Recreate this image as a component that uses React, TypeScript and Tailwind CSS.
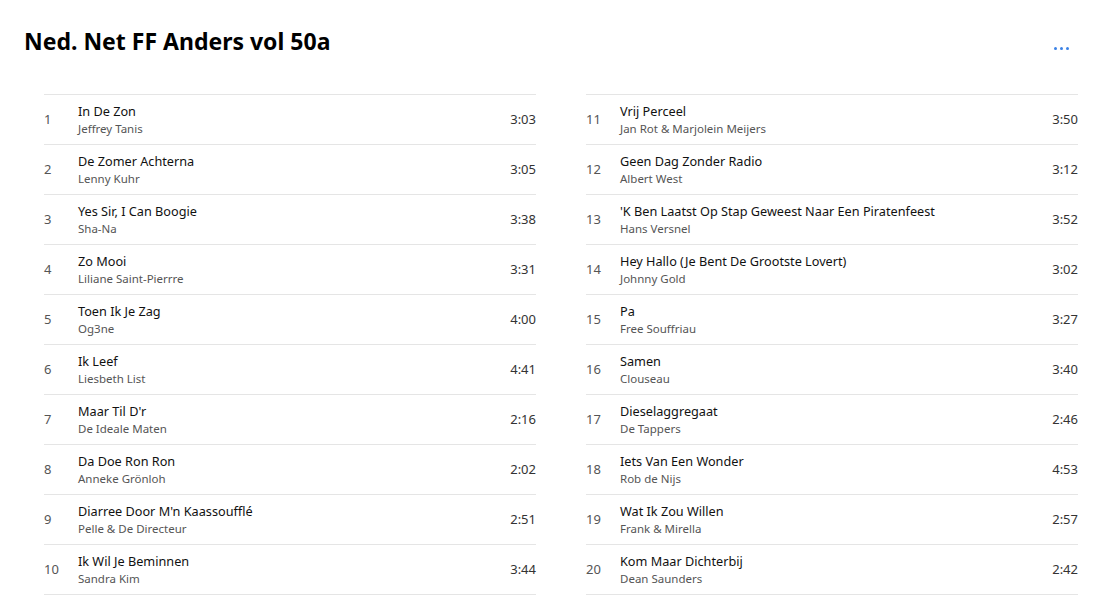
import React from "react";

const tracks: [string, string, string][] = [
  ["In De Zon", "Jeffrey Tanis", "3:03"],
  ["De Zomer Achterna", "Lenny Kuhr", "3:05"],
  ["Yes Sir, I Can Boogie", "Sha-Na", "3:38"],
  ["Zo Mooi", "Liliane Saint-Pierrre", "3:31"],
  ["Toen Ik Je Zag", "Og3ne", "4:00"],
  ["Ik Leef", "Liesbeth List", "4:41"],
  ["Maar Til D'r", "De Ideale Maten", "2:16"],
  ["Da Doe Ron Ron", "Anneke Grönloh", "2:02"],
  ["Diarree Door M'n Kaassoufflé", "Pelle & De Directeur", "2:51"],
  ["Ik Wil Je Beminnen", "Sandra Kim", "3:44"],
  ["Vrij Perceel", "Jan Rot & Marjolein Meijers", "3:50"],
  ["Geen Dag Zonder Radio", "Albert West", "3:12"],
  ["'K Ben Laatst Op Stap Geweest Naar Een Piratenfeest", "Hans Versnel", "3:52"],
  ["Hey Hallo (Je Bent De Grootste Lovert)", "Johnny Gold", "3:02"],
  ["Pa", "Free Souffriau", "3:27"],
  ["Samen", "Clouseau", "3:40"],
  ["Dieselaggregaat", "De Tappers", "2:46"],
  ["Iets Van Een Wonder", "Rob de Nijs", "4:53"],
  ["Wat Ik Zou Willen", "Frank & Mirella", "2:57"],
  ["Kom Maar Dichterbij", "Dean Saunders", "2:42"],
];

function Column({ start }: { start: number }) {
  return (
    <div className="flex-1 border-t border-[#e5e5e5]">
      {tracks.slice(start, start + 10).map((t, i) => (
        <div key={i} className="flex items-center h-[50px] border-b border-[#e5e5e5]">
          <div className="w-[34px] text-[13px] text-[#555]">{start + i + 1}</div>
          <div className="flex-1 flex flex-col leading-none">
            <div className="text-[12.7px] text-[#111] leading-[17px]">{t[0]}</div>
            <div className="text-[11.5px] text-[#555] leading-[16px] mt-[1px]">{t[1]}</div>
          </div>
          <div className="text-[13px] text-[#333]">{t[2]}</div>
        </div>
      ))}
    </div>
  );
}

export default function App() {
  return (
    <div
      className="w-[1117px] h-[598px] bg-white overflow-hidden"
      style={{ fontFamily: '"Segoe UI", "Noto Sans", "Open Sans", sans-serif' }}
    >
      <div className="flex items-start justify-between pl-[24px] pr-[48px] pt-[26px]">
        <h1 className="text-[23px] font-bold text-black leading-[30px]">Ned. Net FF Anders vol 50a</h1>
        <div className="flex gap-[3px] mt-[21px]">
          <span className="w-[3px] h-[3px] rounded-full bg-[#3b82e6]" />
          <span className="w-[3px] h-[3px] rounded-full bg-[#3b82e6]" />
          <span className="w-[3px] h-[3px] rounded-full bg-[#3b82e6]" />
        </div>
      </div>
      <div className="flex gap-[50px] pl-[44px] pr-[39px] mt-[38px]">
        <Column start={0} />
        <Column start={10} />
      </div>
    </div>
  );
}
